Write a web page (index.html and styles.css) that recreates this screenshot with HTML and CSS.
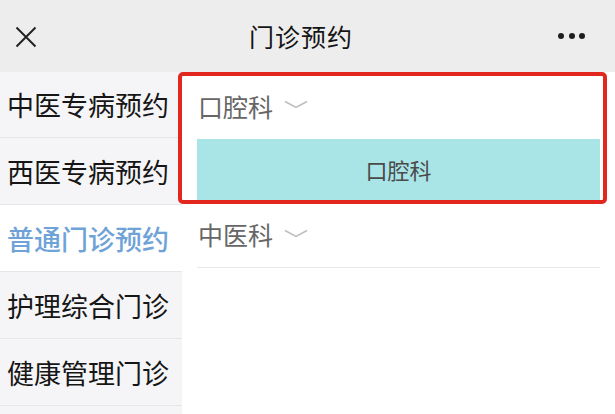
FILE: index.html
```html
<!DOCTYPE html>
<html lang="zh">
<head>
<meta charset="utf-8">
<title>门诊预约</title>
<link rel="stylesheet" href="styles.css">
</head>
<body>
<header class="topbar">
  <div class="bar-left">
    <svg class="icon-close" width="22" height="22" viewBox="0 0 22 22"><path d="M1.5 1.5 L20.5 20.5 M20.5 1.5 L1.5 20.5" stroke="#222" stroke-width="2" fill="none"/></svg>
  </div>
  <div class="bar-title">门诊预约</div>
  <div class="bar-right">
    <span class="dot"></span><span class="dot"></span><span class="dot"></span>
  </div>
</header>
<main class="layout">
  <nav class="sidebar">
    <div class="side-item">中医专病预约</div>
    <div class="side-item">西医专病预约</div>
    <div class="side-item active">普通门诊预约</div>
    <div class="side-item">护理综合门诊</div>
    <div class="side-item">健康管理门诊</div>
    <div class="side-rest"></div>
  </nav>
  <section class="content">
    <div class="group">
      <div class="dept-row">
        <span class="dept-name">口腔科</span>
        <svg class="chev" width="24" height="9" viewBox="0 0 24 9"><path d="M1 1.5 L12 7.5 L23 1.5" stroke="#bdbdbd" stroke-width="1.5" fill="none"/></svg>
      </div>
      <div class="dept-option">口腔科</div>
      <div class="highlight"></div>
    </div>
    <div class="dept-row bordered">
      <span class="dept-name">中医科</span>
      <svg class="chev" width="24" height="9" viewBox="0 0 24 9"><path d="M1 1.5 L12 7.5 L23 1.5" stroke="#bdbdbd" stroke-width="1.5" fill="none"/></svg>
    </div>
  </section>
</main>
</body>
</html>
```

FILE: styles.css
```css
* { box-sizing: border-box; }
html, body {
  margin: 0;
  padding: 0;
  width: 615px;
  height: 414px;
  overflow: hidden;
  font-family: "Noto Sans CJK SC", "Noto Sans", sans-serif;
  background: #ffffff;
}
.topbar {
  height: 72px;
  background: #ededed;
  display: grid;
  grid-template-columns: 1fr auto 1fr;
  align-items: center;
  padding: 0 30px 0 15px;
}
.bar-left { display: flex; align-items: center; }
.icon-close { display: block; margin-top: 2px; }
.bar-title {
  font-size: 25px;
  color: #151515;
  letter-spacing: 1px;
  margin-left: 2px;
}
.bar-right {
  display: flex;
  justify-content: flex-end;
  gap: 4.5px;
  align-items: center;
}
.dot {
  width: 6px;
  height: 6px;
  border-radius: 50%;
  background: #1e1e1e;
}
.layout {
  display: flex;
  height: 342px;
}
.sidebar {
  width: 182px;
  flex: none;
  background: #f5f5f7;
  display: flex;
  flex-direction: column;
}
.side-item {
  height: 67px;
  flex: none;
  display: flex;
  align-items: center;
  padding-left: 7px;
  font-size: 27px;
  color: #161616;
  border-bottom: 1.5px solid #e6e6e8;
  white-space: nowrap;
}
.side-item:first-child { height: 66px; }
.side-item.active {
  background: #ffffff;
  color: #6fa3d8;
  font-weight: 500;
}
.side-rest { flex: 1; }
.content {
  flex: 1;
  background: #ffffff;
  display: flex;
  flex-direction: column;
}
.group {
  position: relative;
}
.dept-row {
  height: 67px;
  display: flex;
  align-items: center;
  margin: 0 15px;
  padding-left: 1px;
  gap: 11px;
}
.dept-row.bordered {
  height: 67px;
  border-bottom: 1.5px solid #e8e8e8;
}
.dept-name {
  font-size: 25px;
  color: #666666;
}
.chev { display: block; margin-top: -2px; }
.dept-option {
  margin: 0 15px;
  height: 62px;
  background: #a9e5e7;
  display: flex;
  align-items: center;
  justify-content: center;
  font-size: 22px;
  color: #4a4a4a;
  padding-bottom: 2px;
}
.highlight {
  position: absolute;
  left: -4px;
  top: 0;
  width: 429px;
  height: 132px;
  border: 4px solid #e2271f;
  border-radius: 5px;
  pointer-events: none;
}
```
